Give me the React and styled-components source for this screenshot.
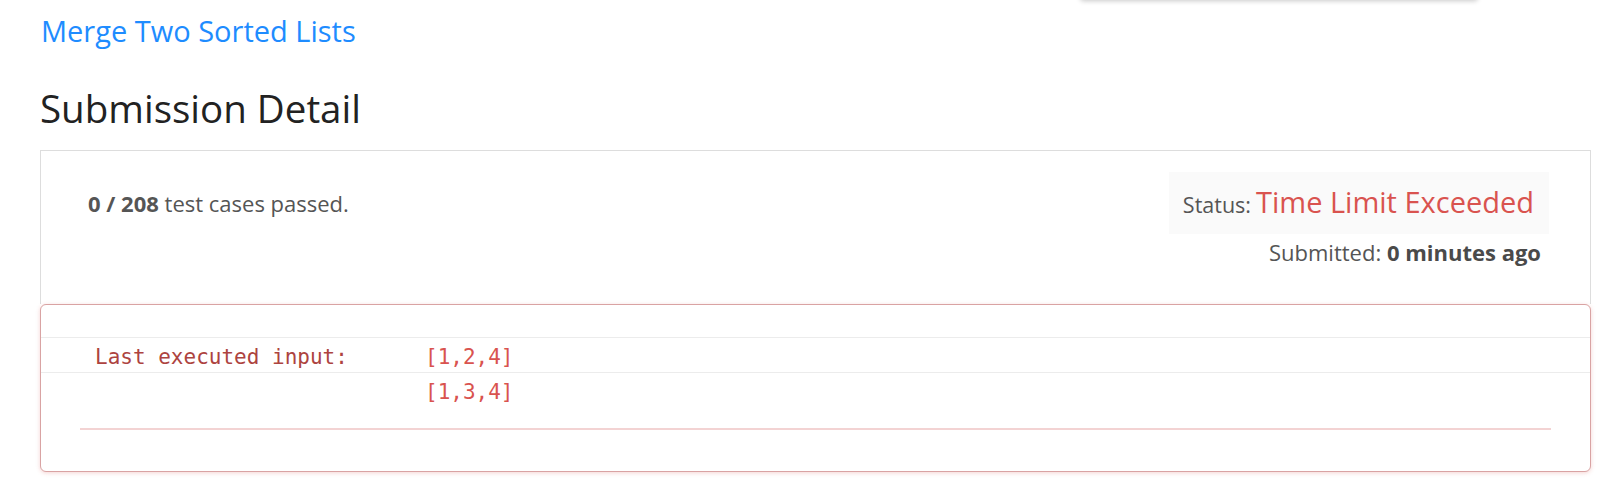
import React from "react";
import styled, { createGlobalStyle } from "styled-components";

const Global = createGlobalStyle`
  html, body { margin: 0; padding: 0; background: #fff; }
  body { font-family: "Open Sans", "Noto Sans", sans-serif; color: #555; }
  * { box-sizing: border-box; }
`;

const Page = styled.div`
  position: relative;
  padding: 0 30px 40px 40px;
`;

const Popover = styled.div`
  position: absolute;
  top: -20px;
  left: 1080px;
  width: 398px;
  height: 20px;
  background: #fff;
  border-radius: 0 0 4px 4px;
  box-shadow: 0 1px 5px rgba(0, 0, 0, 0.22);
`;

const TitleLink = styled.a`
  display: block;
  padding: 15px 0 0 1px;
  font-size: 29px;
  line-height: 32px;
  color: #1e8cff;
  text-decoration: none;
`;

const Heading = styled.h3`
  margin: 40px 0 21px 0;
  font-size: 38.5px;
  line-height: 42px;
  font-weight: 400;
  color: #222;
`;

const SummaryPanel = styled.section`
  height: 154px;
  border: 1px solid #ddd;
  border-bottom: none;
  display: flex;
  justify-content: space-between;
  padding: 21px 0 0 47px;
`;

const PassedText = styled.div`
  padding-top: 16px;
  font-size: 22px;
  line-height: 30px;
  color: #555;
  b { font-weight: 700; }
`;

const StatusCol = styled.div`
  display: flex;
  flex-direction: column;
  align-items: flex-end;
  padding-right: 41px;
`;

const StatusBox = styled.div`
  display: flex;
  align-items: baseline;
  gap: 5px;
  height: 62px;
  padding: 15px 15px 0 14px;
  background: #fafafa;
`;

const StatusLabel = styled.span`
  font-size: 21.5px;
  line-height: 1;
  color: #555;
`;

const StatusValue = styled.span`
  font-size: 29px;
  line-height: 1;
  color: #d9534f;
`;

const Submitted = styled.div`
  margin-top: 2.5px;
  padding-right: 8px;
  font-size: 22px;
  line-height: 30px;
  color: #555;
  b { font-weight: 700; color: #4a4a4a; }
`;

const ErrorPanel = styled.section`
  height: 168px;
  border: 1px solid #d9a3a3;
  border-radius: 6px;
  box-shadow: 0 1px 4px rgba(217, 83, 79, 0.25);
  background: #fff;
`;

const EmptyRow = styled.div`
  height: 32px;
`;

const Row = styled.div`
  display: grid;
  grid-template-columns: 330px 1fr;
  padding: 4px 0 0 54px;
  height: 35px;
  border-top: 1px solid #ececec;
  font-family: "DejaVu Sans Mono", "Liberation Mono", monospace;
  font-size: 21px;
  line-height: 30px;
`;

const Label = styled.span`
  color: #ad4340;
`;

const Value = styled.span`
  color: #d9534f;
`;

const Divider = styled.hr`
  margin: 21px 39px 0 39px;
  border: none;
  border-top: 2px solid #f3d3d3;
`;

export default function App() {
  return (
    <Page>
      <Global />
      <Popover />
      <TitleLink href="#">Merge Two Sorted Lists</TitleLink>
      <Heading>Submission Detail</Heading>
      <SummaryPanel>
        <PassedText>
          <b>0 / 208</b> test cases passed.
        </PassedText>
        <StatusCol>
          <StatusBox>
            <StatusLabel>Status:</StatusLabel>
            <StatusValue>Time Limit Exceeded</StatusValue>
          </StatusBox>
          <Submitted>
            Submitted: <b>0 minutes ago</b>
          </Submitted>
        </StatusCol>
      </SummaryPanel>
      <ErrorPanel>
        <EmptyRow />
        <Row>
          <Label>Last executed input:</Label>
          <Value>[1,2,4]</Value>
        </Row>
        <Row>
          <Label />
          <Value>[1,3,4]</Value>
        </Row>
        <Divider />
      </ErrorPanel>
    </Page>
  );
}
